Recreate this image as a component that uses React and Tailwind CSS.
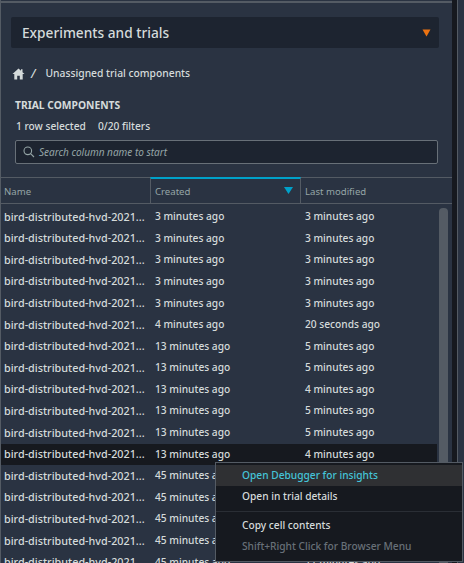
import React from "react";

const rows = [
  ["3 minutes ago", "3 minutes ago"],
  ["3 minutes ago", "3 minutes ago"],
  ["3 minutes ago", "3 minutes ago"],
  ["3 minutes ago", "3 minutes ago"],
  ["3 minutes ago", "3 minutes ago"],
  ["4 minutes ago", "20 seconds ago"],
  ["13 minutes ago", "5 minutes ago"],
  ["13 minutes ago", "5 minutes ago"],
  ["13 minutes ago", "4 minutes ago"],
  ["13 minutes ago", "5 minutes ago"],
  ["13 minutes ago", "5 minutes ago"],
  ["13 minutes ago", "4 minutes ago"],
  ["45 minutes ago", "11 minutes ago"],
  ["45 minutes ago", "11 minutes ago"],
  ["45 minutes ago", "11 minutes ago"],
  ["45 minutes ago", "11 minutes ago"],
  ["45 minutes ago", "11 minutes ago"],
];

export default function App() {
  return (
    <div className="relative h-[563px] w-[464px] overflow-hidden bg-[#16191f] font-['Noto_Sans',sans-serif] text-[#d5dbdb] antialiased">
      <div className="flex h-full">
        <div className="flex h-full w-[452px] flex-col border-l border-[#545b64] bg-[#2a3342]">
          <div className="h-[3px] shrink-0 border-b-2 border-[#545b64] bg-[#2a3342]"></div>
          <div className="mt-[14px] mr-[13px] ml-[10px] flex h-[31px] shrink-0 items-center justify-between rounded-[2px] bg-[#1d2430] pr-[8px] pl-[11px]">
            <span className="text-[13.7px] leading-none font-medium text-[#d5dbdb]">Experiments and trials</span>
            <svg width="9" height="8" viewBox="0 0 9 8"><path d="M0.5 0.5H8.5L4.5 7.5Z" fill="#ec7211" /></svg>
          </div>
          <div className="mt-[18px] flex h-[16px] shrink-0 items-center pl-[11px] text-[10.3px] font-medium">
            <svg width="13" height="12" viewBox="0 0 13 12"><path d="M6.5 0.5L0.5 6H2.3V11.5H5.2V7.8H7.8V11.5H10.7V6H12.5L10.5 4.2V1.2H9V2.8Z" fill="#d5dbdb" /></svg>
            <span className="ml-[6px] text-[12px] italic">/</span>
            <span className="ml-[10px]">Unassigned trial components</span>
          </div>
          <div className="mt-[16px] ml-[14px] shrink-0 text-[10.3px] leading-[14px] font-bold text-[#d5dbdb]">TRIAL COMPONENTS</div>
          <div className="mt-[7px] ml-[15px] flex shrink-0 gap-[12px] text-[10.2px] leading-[14px] font-medium">
            <span>1 row selected</span>
            <span>0/20 filters</span>
          </div>
          <div className="mt-[7px] mr-[14px] ml-[14px] flex h-[24px] shrink-0 items-center rounded-[2px] border border-[#687078] bg-[#1d2430] pl-[7px]">
            <svg width="12" height="12" viewBox="0 0 12 12" fill="none" stroke="#95a5a6" strokeWidth="1.1"><circle cx="4.8" cy="4.8" r="3.8" /><path d="M7.6 7.6L11 11" /></svg>
            <span className="ml-[4px] text-[10px] text-[#95a5a6] italic">Search column name to start</span>
          </div>
          <div className="mt-[13px] flex h-[27px] shrink-0 border-y border-[#545b64] text-[9.6px] text-[#95a5a6]">
            <div className="flex w-[149px] items-center pt-[4px] pl-[3px]">Name</div>
            <div className="-mt-px flex w-[151px] items-center justify-between border-x border-t-2 border-x-[#545b64] border-t-[#00a1c9] pt-[3px] pr-[7px] pl-[4px]">
              <span>Created</span>
              <svg width="9" height="7" viewBox="0 0 9 7" className="-mt-[4px]"><path d="M0 0H9L4.5 7Z" fill="#00a1c9" /></svg>
            </div>
            <div className="flex items-center pt-[4px] pl-[4px]">Last modified</div>
          </div>
          <div className="flex min-h-0 flex-1 flex-col pt-[2px] pr-[15px]">
            {rows.map((r, i) => (
              <div key={i} className={`flex h-[21.6px] shrink-0 items-center font-medium ${i === 11 ? "bg-[#16191f]" : ""}`}>
                <div className="w-[150px] pl-[3px] text-[10.8px] whitespace-nowrap">bird-distributed-hvd-2021...</div>
                <div className="w-[150px] pl-[4px] text-[10.2px]">{r[0]}</div>
                <div className="pl-[4px] text-[10.2px]">{r[1]}</div>
              </div>
            ))}
          </div>
        </div>
        <div className="ml-[5px] flex-1 border-l border-[#545b64] bg-[#2a3342]"></div>
      </div>
      <div className="absolute top-[208px] left-[439px] h-[355px] w-[9px] rounded-t-[4px] bg-[#545b64]"></div>
      <div className="absolute top-[462px] left-[215px] h-[100px] w-[248px] border border-[#545b64] bg-[#16191f] text-[10.2px] font-medium">
        <div className="mt-[2px] flex h-[21px] items-center bg-[#2f3033] pl-[26px] text-[#44c4d8]">Open Debugger for insights</div>
        <div className="flex h-[21px] items-center pl-[26px]">Open in trial details</div>
        <div className="mt-[4px] h-px bg-[#2a2e35]"></div>
        <div className="mt-[3px] flex h-[21px] items-center pl-[26px]">Copy cell contents</div>
        <div className="flex h-[21px] items-center pl-[26px] text-[#687078]">Shift+Right Click for Browser Menu</div>
      </div>
    </div>
  );
}
